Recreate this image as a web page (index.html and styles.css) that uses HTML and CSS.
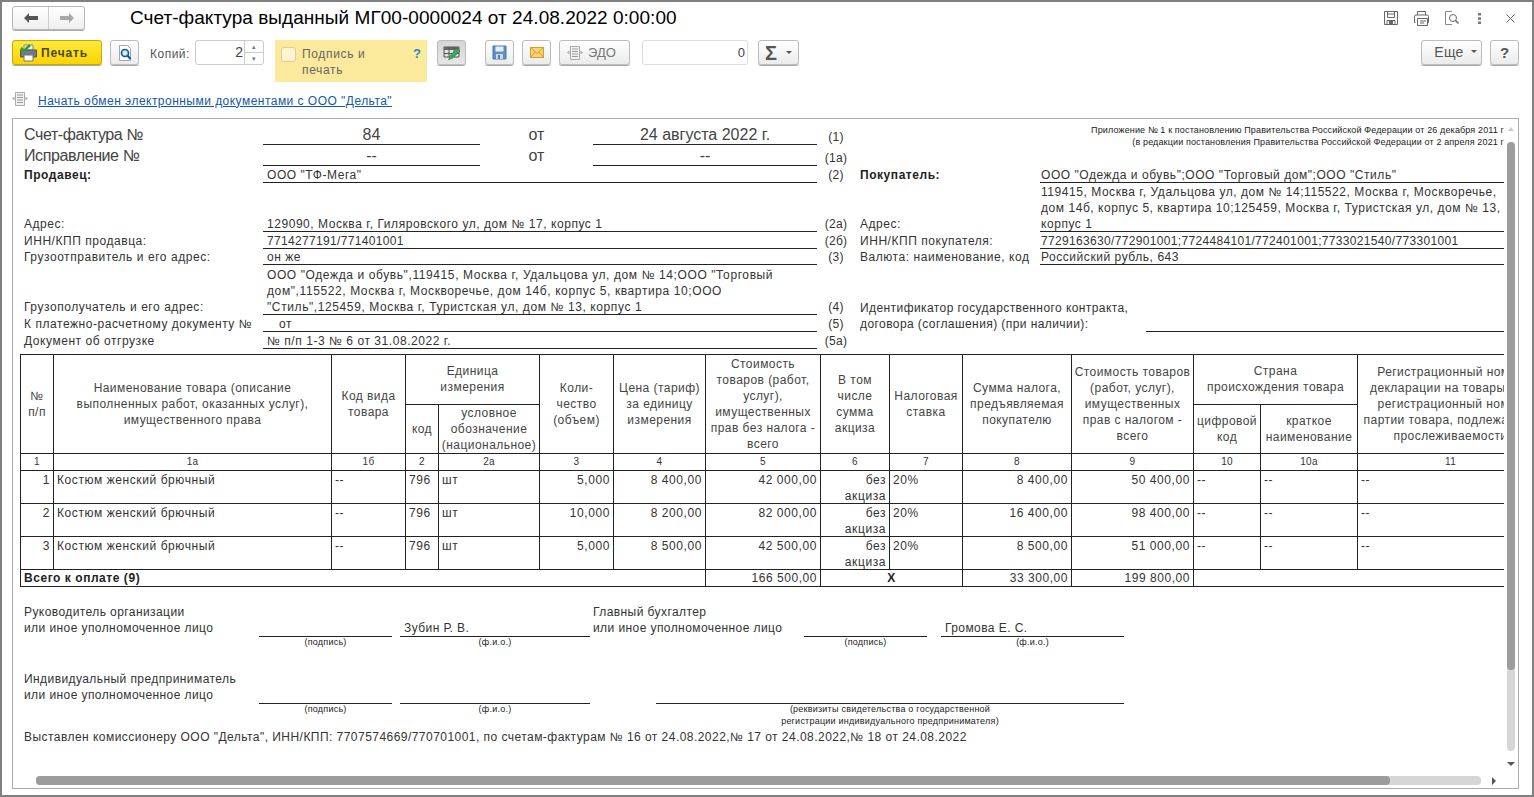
FILE: index.html
```html
<!DOCTYPE html>
<html lang="ru">
<head>
<meta charset="utf-8">
<title>Счет-фактура выданный МГ00-0000024</title>
<link rel="stylesheet" href="styles.css">
</head>
<body>
<div class="window">
  <header class="titlebar">
    <div class="nav">
      <button class="nav-btn"><svg width="16" height="12" viewBox="0 0 16 12"><path d="M1 6l5-5v3h9v4H6v3z" fill="#555"/></svg></button>
      <button class="nav-btn"><svg width="16" height="12" viewBox="0 0 16 12"><path d="M15 6l-5-5v3H1v4h9v3z" fill="#a8a8a8"/></svg></button>
    </div>
    <h1 class="title">Счет-фактура выданный МГ00-0000024 от 24.08.2022 0:00:00</h1>
    <div class="win-icons">
      <svg width="16" height="16" viewBox="0 0 16 16"><path d="M1.500 1.500h13v13h-13zM4.500 1.500v6h7v-6M5 4h6M4 14.500v-4h8v4" fill="none" stroke="#666"/><path d="M6 11h4v3H6z" fill="#666"/></svg>
      <svg width="17" height="17" viewBox="0 0 17 17"><path d="M4.500 5V1.500h8V5M2.500 12.500h-1v-6a1.500 1.500 0 0 1 1.500-1.500h11a1.500 1.500 0 0 1 1.500 1.500v6h-1" fill="none" stroke="#666"/><path d="M4.500 8.500h10v7h-10zM7 11h6M7 13h4" fill="#fff" stroke="#666"/></svg>
      <svg width="17" height="16" viewBox="0 0 17 16"><path d="M8 1.500H1.500v13H8" fill="none" stroke="#888"/><circle cx="9" cy="8" r="3.500" fill="none" stroke="#666"/><path d="M11.500 10.500l3 3" stroke="#666" stroke-width="1.500"/></svg>
      <svg width="5" height="13" viewBox="0 0 5 13"><path d="M1 1h3v2.500H1zM1 5.250h3v2.500H1zM1 9.500h3V12H1z" fill="#777"/></svg>
      <svg width="9" height="9" viewBox="0 0 9 9"><path d="M.5.500l8 8M8.500.500l-8 8" stroke="#666"/></svg>
    </div>
  </header>

  <div class="toolbar">
    <button class="btn btn-print">
      <svg width="20" height="18" viewBox="0 0 20 18"><path d="M5 6V1h9v5z" fill="#eee" stroke="#888"/><path d="M1.500 6h16v7h-16z" fill="#6f7c84" stroke="#555"/><path d="M5 11h9v6H5z" fill="#fff" stroke="#777"/><path d="M2 4l3 3 6-6" fill="none" stroke="#2f9e33" stroke-width="2.500"/></svg>
      <span>Печать</span>
    </button>
    <button class="btn btn-icon gap-8">
      <svg width="18" height="18" viewBox="0 0 18 18"><path d="M3.500 1.500h8l3 3v12h-11z" fill="#fff" stroke="#9ab"/><circle cx="9" cy="9" r="3.500" fill="#d5ecf8" stroke="#135a94" stroke-width="1.700"/><path d="M11.500 11.500l3 3.500" stroke="#135a94" stroke-width="2.200"/></svg>
    </button>
    <label class="copies-label">Копий:</label>
    <div class="spin"><span class="spin-val">2</span><span class="spin-arrows"><i>▴</i><i>▾</i></span></div>
    <div class="sign-box">
      <span class="check"></span>
      <span class="sign-text">Подпись и<br>печать</span>
      <span class="sign-help">?</span>
    </div>
    <button class="btn btn-icon btn-pressed gap-10">
      <svg width="18" height="16" viewBox="0 0 18 16"><path d="M1 2h15v10H1z" fill="#dde2dd" stroke="#555"/><path d="M1 2h15v3H1z" fill="#666"/><path d="M1 8.500h15M6 2v10M11 2v10" stroke="#555"/><path d="M5.500 15l1.500-4.500 7-7 3 2.500-7 7z" fill="#3fa556" stroke="#2a7a3c" stroke-width=".5"/></svg>
    </button>
    <button class="btn btn-icon gap-19">
      <svg width="15" height="15" viewBox="0 0 15 15"><path d="M1 1h13v13H1z" fill="#5d8fc4" stroke="#4a77a8"/><path d="M3.500 1.500h8v5h-8z" fill="#e6eef5"/><path d="M4 9h7v5H4z" fill="#c9d6e2"/><path d="M6 10h2v4H6z" fill="#5d7f9f"/></svg>
    </button>
    <button class="btn btn-icon gap-8">
      <svg width="14" height="11" viewBox="0 0 14 11"><path d="M.5.500h13v10H.5z" fill="#f7d37e" stroke="#dc9a2c"/><path d="M.5.500l6.500 6 6.500-6M.5 10.500l4.500-5.500M13.500 10.500l-4.500-5.500" fill="none" stroke="#dc9a2c"/></svg>
    </button>
    <button class="btn btn-edo gap-8">
      <svg width="16" height="14" viewBox="0 0 16 14"><path d="M3.500.5h9v13h-9z" fill="#f2f2f2" stroke="#aaa"/><path d="M5 3h6M5 5.500h6M5 8h6M5 10.500h6" stroke="#999"/><path d="M0 6.500l2.500-2v4zM16 6.500l-2.500-2v4z" fill="#aaa"/></svg>
      <span>ЭДО</span>
    </button>
    <div class="sum-input">0</div>
    <button class="btn btn-sigma"><span class="sigma">Σ</span><span class="caret"></span></button>
    <button class="btn btn-more">Еще<span class="caret"></span></button>
    <button class="btn btn-icon btn-help gap-8">?</button>
  </div>

  <div class="linkrow">
    <svg class="link-icon" width="16" height="14" viewBox="0 0 16 14"><path d="M3.500.5h9v13h-9z" fill="#f2f2f2" stroke="#aaa"/><path d="M5 3h6M5 5.500h6M5 8h6M5 10.500h6" stroke="#999"/><path d="M0 6.500l2.500-2v4zM16 6.500l-2.500-2v4z" fill="#aaa"/></svg>
    <a class="link" href="#">Начать обмен электронными документами с ООО "Дельта"</a>
  </div>

  <main class="panel">
    <div class="sheet">
      <table class="form">
        <colgroup>
          <col class="f-a"><col class="f-b"><col class="f-c"><col class="f-d"><col class="f-e"><col class="f-f"><col class="f-g"><col class="f-h">
        </colgroup>
        <tr class="r20">
          <td class="big big-l">Счет-фактура №</td><td class="big center line">84</td><td class="big center">от</td><td class="big center line">24 августа 2022 г.</td><td class="num">(1)</td>
          <td colspan="3" rowspan="2" class="note">Приложение № 1 к постановлению Правительства Российской Федерации от 26 декабря 2011 г<br>(в редакции постановления Правительства Российской Федерации от 2 апреля 2021 г</td>
        </tr>
        <tr class="r21">
          <td class="big big-l">Исправление №</td><td class="big center line">--</td><td class="big center">от</td><td class="big center line">--</td><td class="num">(1а)</td>
        </tr>
        <tr class="r17">
          <td class="lbl"><b>Продавец:</b></td><td colspan="3" class="val line">ООО "ТФ-Мега"</td><td class="num">(2)</td>
          <td class="plain"><b>Покупатель:</b></td><td colspan="2" class="val rv line">ООО "Одежда и обувь";ООО "Торговый дом";ООО "Стиль"</td>
        </tr>
        <tr class="r49">
          <td class="lbl bottom">Адрес:</td><td colspan="3" class="val line bottom">129090, Москва г, Гиляровского ул, дом № 17, корпус 1</td><td class="num bottom">(2а)</td>
          <td class="plain bottom">Адрес:</td><td colspan="2" class="val rv line bottom">119415, Москва г, Удальцова ул, дом № 14;115522, Москва г, Москворечье,<br>дом 14б, корпус 5, квартира 10;125459, Москва г, Туристская ул, дом № 13,<br>корпус 1</td>
        </tr>
        <tr class="r17">
          <td class="lbl">ИНН/КПП продавца:</td><td colspan="3" class="val line dig">7714277191/771401001</td><td class="num">(2б)</td>
          <td class="plain">ИНН/КПП покупателя:</td><td colspan="2" class="val rv line dig">7729163630/772901001;7724484101/772401001;7733021540/773301001</td>
        </tr>
        <tr class="r16">
          <td class="lbl">Грузоотправитель и его адрес:</td><td colspan="3" class="val line">он же</td><td class="num">(3)</td>
          <td class="plain">Валюта: наименование, код</td><td colspan="2" class="val rv line">Российский рубль, 643</td>
        </tr>
        <tr class="r50">
          <td class="lbl bottom">Грузополучатель и его адрес:</td><td colspan="3" class="val wide line bottom">ООО "Одежда и обувь",119415, Москва г, Удальцова ул, дом № 14;ООО "Торговый<br>дом",115522, Москва г, Москворечье, дом 14б, корпус 5, квартира 10;ООО<br>"Стиль",125459, Москва г, Туристская ул, дом № 13, корпус 1</td><td class="num bottom">(4)</td>
          <td colspan="2" rowspan="2" class="plain tight bottom">Идентификатор государственного контракта,<br>договора (соглашения) (при наличии):</td><td rowspan="2" class="line"></td>
        </tr>
        <tr class="r17">
          <td class="lbl">К платежно-расчетному документу №</td><td colspan="3" class="val line indent">от</td><td class="num">(5)</td>
        </tr>
        <tr class="r17">
          <td class="lbl">Документ об отгрузке</td><td colspan="3" class="val line">№ п/п 1-3 № 6 от 31.08.2022 г.</td><td class="num">(5а)</td><td colspan="3"></td>
        </tr>
      </table>

      <table class="items">
        <colgroup>
          <col class="c1"><col class="c2"><col class="c3"><col class="c4"><col class="c5"><col class="c6"><col class="c7"><col class="c8"><col class="c9"><col class="c10"><col class="c11"><col class="c12"><col class="c13"><col class="c14"><col class="c15">
        </colgroup>
        <thead>
          <tr class="h50">
            <th rowspan="2">№<br>п/п</th>
            <th rowspan="2">Наименование товара (описание<br>выполненных работ, оказанных услуг),<br>имущественного права</th>
            <th rowspan="2">Код вида<br>товара</th>
            <th colspan="2">Единица<br>измерения</th>
            <th rowspan="2">Коли-<br>чество<br>(объем)</th>
            <th rowspan="2">Цена (тариф)<br>за единицу<br>измерения</th>
            <th rowspan="2">Стоимость<br>товаров (работ,<br>услуг),<br>имущественных<br>прав без налога -<br>всего</th>
            <th rowspan="2">В том<br>числе<br>сумма<br>акциза</th>
            <th rowspan="2">Налоговая<br>ставка</th>
            <th rowspan="2">Сумма налога,<br>предъявляемая<br>покупателю</th>
            <th rowspan="2">Стоимость товаров<br>(работ, услуг),<br>имущественных<br>прав с налогом -<br>всего</th>
            <th colspan="2">Страна<br>происхождения товара</th>
            <th rowspan="2">Регистрационный номер<br>декларации на товары или<br>регистрационный номер<br>партии товара, подлежащего<br>прослеживаемости</th>
          </tr>
          <tr class="h49">
            <th>код</th>
            <th>условное<br>обозначение<br>(национальное)</th>
            <th>цифровой<br>код</th>
            <th>краткое<br>наименование</th>
          </tr>
          <tr class="idx">
            <td>1</td><td>1а</td><td>1б</td><td>2</td><td>2а</td><td>3</td><td>4</td><td>5</td><td>6</td><td>7</td><td>8</td><td>9</td><td>10</td><td>10а</td><td>11</td>
          </tr>
        </thead>
        <tbody>
          <tr class="row">
            <td class="r">1</td><td>Костюм женский брючный</td><td>--</td><td>796</td><td>шт</td><td class="r">5,000</td><td class="r">8 400,00</td><td class="r">42 000,00</td><td class="r">без<br>акциза</td><td>20%</td><td class="r">8 400,00</td><td class="r">50 400,00</td><td>--</td><td>--</td><td>--</td>
          </tr>
          <tr class="row">
            <td class="r">2</td><td>Костюм женский брючный</td><td>--</td><td>796</td><td>шт</td><td class="r">10,000</td><td class="r">8 200,00</td><td class="r">82 000,00</td><td class="r">без<br>акциза</td><td>20%</td><td class="r">16 400,00</td><td class="r">98 400,00</td><td>--</td><td>--</td><td>--</td>
          </tr>
          <tr class="row">
            <td class="r">3</td><td>Костюм женский брючный</td><td>--</td><td>796</td><td>шт</td><td class="r">5,000</td><td class="r">8 500,00</td><td class="r">42 500,00</td><td class="r">без<br>акциза</td><td>20%</td><td class="r">8 500,00</td><td class="r">51 000,00</td><td>--</td><td>--</td><td>--</td>
          </tr>
          <tr class="total">
            <td colspan="7"><b>Всего к оплате (9)</b></td><td class="r">166 500,00</td><td colspan="2" class="mid"><b>Х</b></td><td class="r">33 300,00</td><td class="r">199 800,00</td><td colspan="3"></td>
          </tr>
        </tbody>
      </table>

      <table class="signs">
        <colgroup>
          <col class="s-a"><col class="s-b"><col class="s-c"><col class="s-d"><col class="s-e"><col class="s-f"><col class="s-g"><col class="s-h"><col class="s-i">
        </colgroup>
        <tr class="s16">
          <td>Руководитель организации</td><td colspan="3"></td><td colspan="2" class="chief">Главный бухгалтер</td><td colspan="3"></td>
        </tr>
        <tr class="s16">
          <td>или иное уполномоченное лицо</td><td class="line"></td><td></td><td class="line name">Зубин Р. В.</td><td colspan="2" class="chief">или иное уполномоченное лицо</td><td class="line"></td><td></td><td class="line name">Громова Е. С.</td>
        </tr>
        <tr class="s-cap">
          <td></td><td class="cap">(подпись)</td><td></td><td class="cap">(ф.и.о.)</td><td colspan="2"></td><td class="cap">(подпись)</td><td></td><td class="cap">(ф.и.о.)</td>
        </tr>
        <tr class="s-gap"><td colspan="9"></td></tr>
        <tr class="s16">
          <td>Индивидуальный предприниматель</td><td colspan="8"></td>
        </tr>
        <tr class="s16">
          <td>или иное уполномоченное лицо</td><td class="line"></td><td></td><td class="line"></td><td></td><td colspan="4" class="line"></td>
        </tr>
        <tr class="s-cap2">
          <td></td><td class="cap">(подпись)</td><td></td><td class="cap">(ф.и.о.)</td><td></td><td colspan="4" class="cap">(реквизиты свидетельства о государственной<br>регистрации индивидуального предпринимателя)</td>
        </tr>
      </table>
      <p class="footnote">Выставлен комиссионеру ООО "Дельта", ИНН/КПП: 7707574669/770701001, по счетам-фактурам № 16 от 24.08.2022,№ 17 от 24.08.2022,№ 18 от 24.08.2022</p>
    </div>

    <div class="vscroll"><span class="arrow-up"></span><div class="vtrack"><div class="vthumb"></div></div><span class="arrow-down"></span></div>
    <div class="hscroll"><div class="htrack"><div class="hthumb"></div></div><span class="arrow-right"></span></div>
  </main>
</div>
</body>
</html>
```
FILE: styles.css
```css
* { box-sizing: border-box; }
html, body { margin: 0; padding: 0; background: #fff; }
body { font-family: "Liberation Sans", Arial, sans-serif; color: #333; font-size: 12px; }
.window { width: 1534px; height: 797px; border: 2px solid #808080; padding: 4px 13px 6px 10px; overflow: hidden; background: #fff; display: flex; flex-direction: column; }

.titlebar { display: flex; align-items: center; height: 24px; flex: none; }
.nav { display: flex; width: 73px; height: 24px; border: 1px solid #b8b8b8; border-radius: 3px; background: linear-gradient(#fff, #eee); box-shadow: 0 1px 0 #aaa; }
.nav-btn { flex: 1; border: 0; background: none; padding: 0; display: flex; align-items: center; justify-content: center; }
.nav-btn + .nav-btn { border-left: 1px solid #ccc; }
.title { margin: 0 0 0 45px; font-size: 19px; font-weight: 400; color: #000; white-space: nowrap; flex: 1; letter-spacing: .04px; }
.win-icons { display: flex; align-items: center; gap: 14px; margin-right: 3px; padding-right: 1px; }
.win-icons svg:nth-child(4) { margin-left: 2px; }
.win-icons svg:nth-child(5) { margin-left: 10px; }

.toolbar { display: flex; align-items: flex-start; height: 42px; margin-top: 10px; flex: none; }
.btn { height: 25px; border: 1px solid #bcbcbc; border-radius: 3px; background: linear-gradient(#fff, #ebebeb); box-shadow: 0 1px 0 #a8a8a8; font: 13px "Liberation Sans", Arial, sans-serif; color: #444; display: flex; align-items: center; justify-content: center; padding: 0; flex: none; }
.gap-8 { margin-left: 8px; }
.gap-10 { margin-left: 10px; }
.gap-19 { margin-left: 19px; }
.btn-print { width: 90px; background: linear-gradient(#ffea3c, #fbd400); border-color: #c8a800; justify-content: flex-start; padding-left: 6px; gap: 2px; font-weight: 700; font-size: 12px; color: #4a4a1a; letter-spacing: .85px; }
.btn-icon { width: 29px; }
.btn-pressed { background: linear-gradient(#d6d6d6, #e6e6e6); }
.btn-edo { width: 71px; gap: 5px; padding-right: 6px; color: #777; }
.btn-sigma { width: 41px; margin-left: 10px; gap: 9px; }
.sigma { font-size: 20px; font-weight: 700; color: #555; line-height: 20px; }
.caret { width: 0; height: 0; border: 3px solid transparent; border-top: 3px solid #555; border-bottom: 0; display: block; }
.btn-more { width: 61px; margin-left: auto; gap: 7px; padding: 0 0 2px 8px; font-size: 14px; color: #555; letter-spacing: .3px; }
.btn-help { font-size: 15px; font-weight: 700; color: #555; }
.copies-label { margin: 7px 0 0 11px; width: 45px; color: #555; letter-spacing: .5px; font-size: 12px; }
.spin { width: 69px; height: 25px; border: 1px solid #ccc; border-radius: 3px; display: flex; background: #fff; }
.spin-val { flex: 1; text-align: right; font-size: 14px; line-height: 23px; padding-right: 1px; color: #444; }
.spin-arrows { width: 19px; border-left: 1px solid #ccc; display: flex; flex-direction: column; }
.spin-arrows i { flex: 1; font-style: normal; font-size: 7px; line-height: 11px; text-align: center; color: #777; }
.spin-arrows i + i { border-top: 1px solid #ccc; }
.sign-box { width: 152px; height: 42px; margin-left: 11px; background: #fbe99c; display: flex; padding: 6px 6px 0 6px; position: relative; flex: none; }
.check { width: 15px; height: 15px; border: 1px solid #d8cfa0; border-radius: 3px; background: #fdf5cf; flex: none; margin-top: 1px; }
.sign-text { margin-left: 6px; line-height: 16px; font-size: 12px; color: #666; letter-spacing: .65px; flex: 1; }
.sign-help { color: #2b86c5; font-weight: 700; font-size: 13px; }
.sum-input { width: 106px; height: 25px; margin-left: 12px; border: 1px solid #ddd; border-radius: 3px; text-align: right; padding-right: 2px; font-size: 13px; line-height: 23px; color: #444; }

.linkrow { height: 16px; margin-top: 10px; display: flex; align-items: center; gap: 10px; flex: none; }
.link-icon { margin-top: -3px; }
.link { color: #1258ad; font-size: 12px; letter-spacing: .47px; padding-top: 1px; }

.panel { position: relative; width: 1507px; height: 671px; margin-top: 10px; border: 1px solid #aaa; flex: none; overflow: hidden; }
.sheet { width: 1491px; height: 654px; padding: 5px 0 0 7px; overflow: hidden; }
table { border-collapse: collapse; table-layout: fixed; font-size: 12px; color: #333; letter-spacing: .55px; }
td, th { padding: 0; font-weight: 400; }
b { font-weight: 700; color: #222; }

.form { width: 1484px; line-height: 16px; }
.f-a { width: 243px; } .f-b { width: 217px; } .f-c { width: 113px; } .f-d { width: 224px; } .f-e { width: 43px; } .f-f { width: 180px; } .f-g { width: 106px; } .f-h { width: 358px; }
.r20 { height: 20px; } .r17 { height: 17px; } .r21 { height: 21px; } .r16 { height: 16px; } .r49 { height: 49px; } .r50 { height: 50px; }
.r16 td { line-height: 15px; }
.form td { vertical-align: bottom; white-space: nowrap; overflow: hidden; }
.form td::after { content: ""; display: block; margin-top: -1px; }
.form td.big::after, .form td.note::after { content: none; }
.form td.lbl { padding-left: 4px; }
.form td.big { font-size: 16px; line-height: 17px; letter-spacing: 0; padding: 0 0 1px 4px; color: #444; }
.form td.big-l { letter-spacing: -.4px; }
.form td.center { text-align: center; padding-left: 0; }
.form td.val { padding-left: 4px; }
.form td.rv { padding-left: 1px; }
.form td.dig { letter-spacing: .33px; }
.form td.wide { letter-spacing: .6px; }
.form td.tight { letter-spacing: .42px; }
.form td.indent { padding-left: 16px; }
.form td.line, .signs td.line { border-bottom: 1px solid #222; }
.form td.num { text-align: center; padding-right: 5px; letter-spacing: .3px; }
.form td.note { font-size: 9px; line-height: 12px; text-align: right; vertical-align: top; letter-spacing: .14px; color: #222; }

.items { width: 1523px; margin-top: 5px; line-height: 16px; }
.items th, .items td { border: 1px solid #222; }
.c1 { width: 33px; } .c2 { width: 278px; } .c3 { width: 74px; } .c4 { width: 33px; } .c5 { width: 101px; } .c6 { width: 74px; } .c7 { width: 92px; } .c8 { width: 115px; } .c9 { width: 69px; } .c10 { width: 73px; } .c11 { width: 109px; } .c12 { width: 122px; } .c13 { width: 67px; } .c14 { width: 97px; } .c15 { width: 186px; }
.items th { text-align: center; vertical-align: middle; white-space: nowrap; overflow: hidden; color: #444; letter-spacing: .45px; }
.h50 { height: 50px; } .h49 { height: 49px; }
.idx { height: 17px; }
.idx td { font-size: 10px; text-align: center; line-height: 14px; letter-spacing: .3px; }
.row { height: 33px; }
.row td { vertical-align: top; padding: 1px 3px 0; line-height: 16px; overflow: hidden; letter-spacing: .58px; }
.row td::after { content: ""; display: block; margin-top: -1px; }
.row td.r, .total td.r { text-align: right; }
.total { height: 17px; }
.total td { padding: 1px 3px 0; line-height: 15px; }
.total td.mid { text-align: center; }

.signs { width: 1104px; margin: 17px 0 0 0; line-height: 16px; letter-spacing: .42px; }
.s-a { width: 239px; } .s-b { width: 133px; } .s-c { width: 8px; } .s-d { width: 190px; } .s-e { width: 66px; } .s-f { width: 148px; } .s-g { width: 123px; } .s-h { width: 14px; } .s-i { width: 183px; }
.signs td { padding: 0; white-space: nowrap; vertical-align: bottom; }
.signs td:first-child { padding-left: 4px; }
.s16 { height: 16px; }
.signs td.chief { padding-left: 3px; }
.signs td.name { padding-left: 4px; }
.s-cap { height: 14px; }
.s-gap { height: 21px; }
.s-cap2 { height: 25px; }
.signs td.cap { font-size: 9px; line-height: 12px; text-align: center; vertical-align: top; letter-spacing: .23px; color: #222; }
.signs td.cap::before { content: ""; display: block; margin-top: -1px; }
.footnote { margin: 1px 0 0 4px; line-height: 16px; letter-spacing: .46px; white-space: nowrap; }

.vscroll { position: absolute; top: 5px; right: 3px; width: 8px; height: 650px; }
.arrow-up { position: absolute; top: 3px; left: 1px; border: 3px solid transparent; border-bottom: 4px solid #ccc; border-top: 0; }
.vtrack { position: absolute; top: 18px; left: 0; width: 8px; height: 609px; background: #d6d6d6; border-radius: 4px; }
.vthumb { width: 8px; height: 528px; background: #9c9c9c; border-radius: 4px; }
.arrow-down { position: absolute; bottom: 8px; left: 0; border: 4px solid transparent; border-top: 4px solid #555; border-bottom: 0; }
.hscroll { position: absolute; left: 23px; bottom: 3px; width: 1460px; height: 9px; }
.htrack { width: 1445px; height: 9px; background: #d6d6d6; border-radius: 4px; }
.hthumb { width: 1354px; height: 9px; background: #9c9c9c; border-radius: 4px; }
.arrow-right { position: absolute; right: 0; top: 1px; border: 4px solid transparent; border-left: 4px solid #555; border-right: 0; }
```
